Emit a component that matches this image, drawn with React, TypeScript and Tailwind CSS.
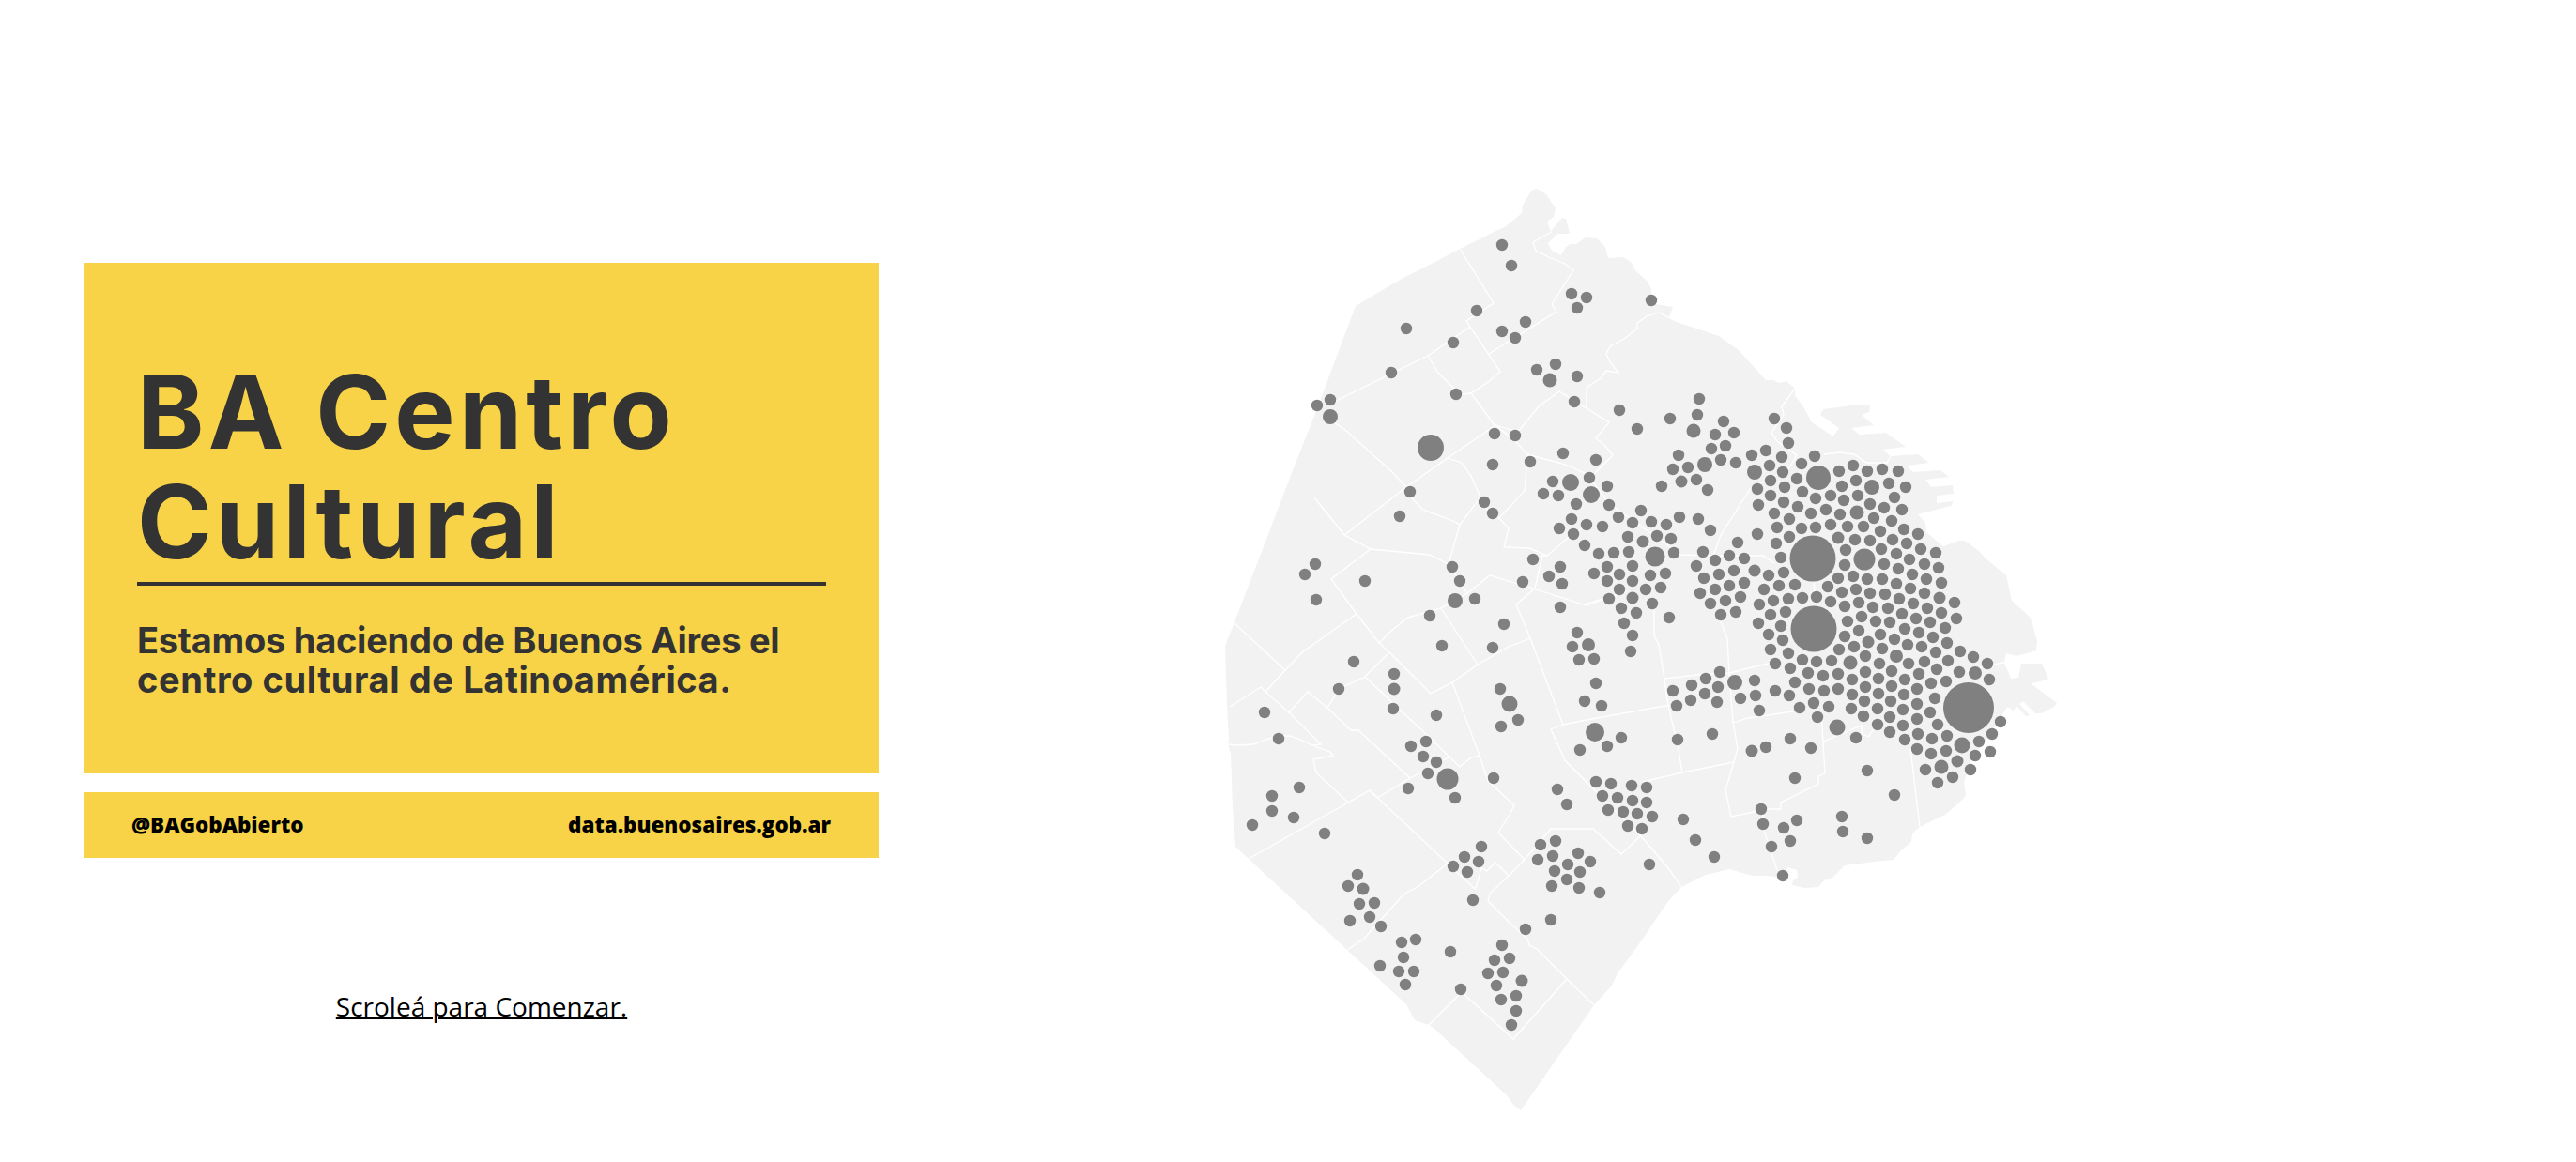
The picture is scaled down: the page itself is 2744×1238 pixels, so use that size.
const land =
  "1305,688 1315,663 1366,530 1377,501 1400,443 1444,326 1493,297 1523,282 1555,265 1578,254 1593,246 1603,242 1621,227 1622,219 1631,203 1637,201 1647,207 1657,222 1655,231 1648,236 1652,247 1653,245 1664,232 1668,233 1672,248 1670,249 1659,249 1649,259 1653,267 1663,272 1668,263 1673,260 1679,260 1689,253 1701,254 1710,263 1713,275 1729,274 1738,280 1742,288 1755,300 1759,308 1759,318 1764,324 1782,327 1778,338 1783,342 1831,358 1852,373 1881,405 1889,405 1895,408 1903,406 1912,414 1912,421 1922,435 1930,450 1953,465 1959,456 1939,442 1942,436 1972,432 1982,431 1992,432 1991,439 1983,442 1996,453 1972,456 1981,463 2009,461 2030,476 2005,479 2014,486 2043,484 2055,493 2031,496 2038,503 2067,501 2076,508 2051,511 2057,519 2080,517 2081,526 2063,528 2063,536 2081,534 2078,539 2043,548 2051,557 2052,567 2070,582 2087,576 2093,576 2108,587 2115,595 2137,613 2143,640 2163,658 2170,683 2169,693 2155,697 2148,699 2137,696 2135,706 2142,723 2150,722 2153,707 2175,707 2182,723 2170,727 2163,728 2191,749 2188,753 2175,760 2168,760 2155,747 2151,750 2162,762 2158,763 2148,752 2145,757 2138,753 2130,767 2100,810 2092,833 2094,848 2085,857 2072,868 2045,881 2037,888 2036,897 2025,906 2017,916 1997,918 1965,922 1952,935 1943,938 1937,945 1923,946 1909,943 1910,938 1915,935 1914,927 1905,924 1897,935 1883,933 1867,933 1842,926 1817,932 1791,945 1777,960 1750,1000 1723,1037 1717,1050 1698,1071 1620,1183 1612,1177 1605,1167 1528,1096 1522,1092 1507,1087 1498,1070 1435,1012 1330,915 1316,902 1313,860 1311,803 1308,793 1309,787 1307,752";

const borders = [
  "1555,265 1591,323 1562,342 1598,396 1585,407 1567,419 1558,420 1548,413 1532,397 1521,379",
  "1423,427 1521,379 1566,348",
  "1418,448 1433,458 1483,503 1498,519 1542,488 1593,453 1614,470 1627,484",
  "1567,419 1592,453",
  "1593,453 1617,460 1639,433 1661,417 1690,435 1714,450 1700,467 1710,475 1718,485 1700,503 1690,515",
  "1586,377 1658,332 1653,324 1676,288 1667,281 1650,274 1636,267 1633,258 1653,247",
  "1542,488 1557,493 1567,507 1577,530 1555,559",
  "1400,530 1432,570 1460,585 1523,591 1543,601",
  "1432,570 1498,519 1503,530 1516,543 1548,555 1555,559 1543,601 1563,632",
  "1627,484 1624,523 1597,552 1607,563 1602,583 1629,584 1648,592 1670,573 1690,560",
  "1597,552 1577,537",
  "1627,484 1668,495 1690,505 1712,533 1723,543 1747,560 1778,582 1790,591 1825,592 1833,570 1865,520 1905,500 1914,485 1893,470 1887,461 1900,442 1898,433 1912,414",
  "1460,585 1418,617 1445,654 1469,685 1481,673 1499,658 1535,648 1563,632 1587,613 1633,627 1690,645 1733,630",
  "1648,592 1643,592 1635,627 1615,644 1630,680 1665,772 1652,777 1667,810 1750,893 1778,926 1791,945",
  "1445,654 1387,695 1369,714 1314,663",
  "1369,714 1348,737 1373,759 1393,737 1414,754 1426,734 1454,721 1480,695 1469,685",
  "1454,721 1520,783 1555,817 1567,807 1576,805 1585,832 1613,858 1608,868 1596,887 1623,915 1622,918 1607,933",
  "1480,695 1524,739 1547,727 1574,708 1607,689 1630,680",
  "1535,648 1574,708",
  "1547,727 1576,805",
  "1343,732 1348,737",
  "1310,753 1343,732",
  "1373,759 1407,793 1398,794 1383,787 1373,784 1362,784 1348,788 1335,793 1317,794 1308,793",
  "1400,795 1417,801 1420,805 1399,809 1402,823 1436,855 1459,842 1542,920 1510,945 1496,952 1453,1000 1435,1012",
  "1436,855 1330,915",
  "1414,754 1439,778 1447,778 1502,829 1467,850 1459,842",
  "1502,829 1543,807",
  "1665,772 1690,767 1773,752 1777,752",
  "1542,920 1570,946 1572,946 1578,925 1584,928 1593,919 1607,933 1587,952 1585,960 1607,982 1627,1000 1629,1007 1637,1011 1669,1043 1698,1071",
  "1669,1043 1612,1107 1557,1057 1522,1092",
  "1622,918 1652,883 1697,883 1727,910 1750,888",
  "1690,435 1690,413 1705,403 1711,395 1724,397 1715,386 1711,377 1715,369 1730,361 1744,350 1744,344 1754,337 1767,333 1781,340",
  "1943,484 1959,482 1975,484 1988,493 2010,493 2014,486",
  "1825,592 1863,592 1878,592 1890,600",
  "1832,660 1840,680 1842,718 1846,770 1851,797 1847,812 1838,842 1844,870 1883,862 1897,862 1897,855 1937,835 1937,827 1944,824 1942,790 1940,760",
  "1762,650 1762,677 1767,687 1773,723 1777,752 1787,793 1792,823",
  "1690,643 1733,630",
  "1773,723 1817,718 1842,717 1887,706",
  "1750,833 1792,823 1847,812",
  "1846,770 1862,765 1910,758",
  "1942,790 1983,773 1983,781 1990,785 1997,775",
  "1878,862 1878,882 1893,927",
  "2035,797 2045,881",
  "1932,620 1933,630",
  "2137,705 2095,715",
];

// [x, y] are the regular points, [x, y, r] the larger ones
const dots: number[][] = [
  [1600, 261], [1610, 283], [1674, 313], [1690, 317], [1680, 328], [1573, 331], [1498, 350], [1625, 343], [1600, 353], [1614, 360],
  [1548, 365], [1657, 388], [1637, 394], [1651, 405, 7.5], [1680, 401], [1482, 397], [1677, 428], [1551, 420], [1417, 426], [1403, 432],
  [1417, 444, 8], [1524, 477, 14], [1592, 462], [1614, 464], [1665, 483], [1630, 492], [1590, 495], [1654, 513], [1673, 514, 9], [1502, 524],
  [1693, 509], [1581, 535], [1590, 547], [1491, 550], [1644, 526], [1660, 528], [1679, 537], [1674, 553], [1690, 559], [1661, 563],
  [1676, 569], [1688, 581], [1633, 596], [1662, 604], [1547, 604], [1650, 614], [1664, 622], [1622, 620], [1555, 619], [1401, 601],
  [1390, 612], [1454, 619], [1402, 639], [1571, 638], [1550, 640, 8], [1662, 647], [1523, 656], [1602, 665], [1680, 674], [1675, 689],
  [1692, 687, 7], [1682, 703], [1536, 688], [1590, 690], [1442, 705], [1485, 718], [1485, 734, 6.5], [1426, 734], [1598, 734], [1608, 750, 8.5],
  [1688, 747], [1484, 755], [1347, 759], [1530, 762], [1617, 767], [1599, 774], [1362, 787], [1519, 790], [1503, 795], [1516, 806],
  [1530, 812], [1683, 799], [1521, 824], [1542, 830, 11.5], [1591, 829], [1384, 839], [1500, 840], [1659, 841], [1355, 848], [1550, 850],
  [1669, 857], [1355, 864], [1378, 871], [1334, 879], [1411, 888], [1713, 863], [1729, 865], [1744, 867], [1734, 880], [1749, 883],
  [1657, 896], [1641, 900], [1654, 912], [1638, 916], [1681, 909], [1670, 921], [1694, 918], [1656, 928], [1683, 929], [1669, 937],
  [1653, 944], [1682, 946], [1704, 951], [1578, 902], [1560, 913], [1575, 918], [1548, 923], [1563, 929], [1569, 959], [1652, 980],
  [1625, 990], [1446, 932], [1436, 944], [1452, 947, 6.5], [1464, 962], [1448, 963], [1459, 977], [1438, 981], [1471, 987], [1508, 1001],
  [1493, 1004], [1495, 1020], [1545, 1014], [1600, 1007], [1608, 1021], [1592, 1023], [1470, 1029], [1490, 1035], [1506, 1035], [1601, 1036],
  [1585, 1037], [1621, 1045, 6.5], [1497, 1049], [1594, 1050], [1556, 1054], [1615, 1061], [1599, 1065], [1615, 1077], [1610, 1092],
  [1759, 320], [1810, 425], [1725, 437], [1808, 442], [1779, 446], [1836, 449], [1890, 446], [1903, 456], [1744, 457], [1804, 459, 7.5],
  [1847, 461], [1827, 463], [1905, 472], [1838, 475], [1823, 478], [1881, 480], [1866, 485], [1788, 485], [1933, 486], [1898, 487],
  [1700, 490], [1833, 490], [1849, 493], [1816, 495, 8], [1885, 496], [1919, 494], [1974, 496], [2005, 500], [1959, 502], [1989, 502],
  [2022, 502], [1798, 498], [1782, 500], [1869, 503, 8], [1899, 503], [1937, 509, 13], [1914, 510], [1807, 511], [1886, 512], [1977, 512],
  [1791, 513, 6.5], [2012, 515], [1712, 518], [1770, 518], [1962, 518], [1994, 519, 8], [2030, 519], [1901, 519], [1872, 521], [1819, 522],
  [1695, 527, 9], [1920, 524], [1886, 528], [1950, 528], [1979, 528], [2018, 530], [1934, 531], [1964, 533], [1900, 535], [1992, 537],
  [1714, 538], [1873, 538], [1915, 540], [2007, 541], [2026, 543], [1748, 544], [1945, 543], [1978, 546, 7.5], [1890, 547], [1929, 547],
  [1960, 548], [1724, 551], [1789, 551], [1809, 553], [1906, 553], [1996, 552], [2015, 555], [1739, 557], [1759, 556], [1775, 559],
  [1950, 559], [1968, 561], [1985, 561], [1707, 561], [1893, 562], [1934, 562], [1919, 563], [2028, 564], [1822, 565], [2003, 566],
  [1872, 569], [2043, 569], [1765, 571], [1906, 572], [1734, 572], [1780, 574], [1958, 573, 6.5], [2016, 575], [1976, 575], [1992, 576],
  [1750, 577, 6.5], [1892, 579], [1851, 578], [2031, 579], [1931, 595, 24.5], [1986, 596, 11.5], [1966, 586], [2004, 585], [2046, 585], [1814, 588],
  [1735, 588], [1719, 589], [2062, 589], [1783, 589], [1703, 590], [2020, 590], [1842, 592], [1763, 593, 10.5], [1897, 594], [2034, 596],
  [1858, 595], [1827, 597], [2007, 601], [2050, 601], [1739, 603], [1965, 602], [1712, 604], [1807, 603], [2065, 605], [2022, 606],
  [1847, 608], [1869, 608, 6.5], [1900, 610], [2037, 612], [1774, 611], [1725, 612], [1884, 613], [1831, 612], [1698, 611], [1758, 613],
  [1974, 614], [1958, 616], [1989, 617], [2005, 617], [1815, 616], [2052, 617], [1712, 619], [1739, 619], [2020, 622], [1858, 621],
  [2068, 621], [1912, 623], [1895, 624], [1842, 624], [1947, 625], [1769, 626], [1725, 628], [1879, 628], [1827, 628], [1753, 628],
  [2035, 627], [1977, 628], [1962, 631], [2050, 632], [1992, 632], [1811, 632], [2008, 633], [2066, 637, 6.5], [1854, 636], [1739, 637, 6.5],
  [1935, 636], [1920, 637], [2023, 638], [1905, 638], [1714, 638], [1889, 640], [1838, 640], [2038, 643], [1950, 641], [2082, 642],
  [1980, 642], [1760, 643], [1822, 643], [1874, 644], [1965, 646], [1995, 647], [1727, 648], [2053, 648], [2011, 648], [1902, 652],
  [1849, 652], [1743, 653], [2068, 653], [2026, 654], [1833, 655], [1886, 655], [1983, 657], [1778, 658], [2084, 659], [2041, 659],
  [1932, 670, 24.5], [1998, 662], [1968, 662], [2013, 663], [2056, 663], [1730, 664], [1873, 664], [1897, 667], [2072, 669], [2029, 670],
  [1980, 672], [2044, 674], [2003, 676], [1739, 677], [1884, 676], [1965, 678], [2059, 679], [2018, 681], [1899, 682], [1990, 684, 6.5],
  [2074, 685], [2032, 687], [1975, 689], [2047, 689], [2005, 691], [1886, 692], [1959, 692], [2062, 695], [1737, 694], [2088, 694],
  [1905, 696], [2020, 699, 7], [1987, 699], [1698, 702], [2102, 700], [2050, 705], [1920, 703], [2075, 704], [2033, 707], [2002, 707],
  [1935, 705], [1951, 704], [1971, 706, 7.5], [1891, 707], [2117, 707], [1907, 712], [1987, 716], [1832, 716], [2087, 716], [2063, 713],
  [2015, 715], [2104, 717, 7], [1926, 717], [2044, 718], [1942, 720], [1958, 718], [1817, 723], [2029, 724], [2001, 723], [1973, 724],
  [2119, 724], [1869, 725], [2057, 728], [2073, 726], [1848, 727, 8], [1912, 727], [1700, 728], [1802, 730], [1830, 732], [1987, 732],
  [2015, 731], [1927, 734], [1958, 734], [2042, 734], [1891, 736], [1943, 736], [1782, 736], [2001, 739], [1816, 739], [1973, 740],
  [2028, 740], [1870, 741], [1906, 741], [2061, 744], [1854, 744], [2097, 754, 27], [1801, 746], [1986, 747], [2014, 747], [1829, 748],
  [1932, 749], [2042, 750], [1948, 753], [1917, 754], [1786, 752], [1706, 752], [1972, 755], [2000, 755], [2027, 756], [1874, 757],
  [2056, 759], [1985, 763], [2013, 764], [1936, 764], [2042, 766], [2131, 769], [2064, 772], [2000, 772], [2027, 773], [1957, 775, 8.5],
  [1699, 780, 10], [1824, 782], [2043, 782], [2122, 782], [2013, 780], [2074, 784], [1977, 786], [1727, 786], [1787, 788], [1907, 787],
  [2029, 788], [2058, 787], [2108, 790], [2090, 794, 8.5], [1881, 796], [1929, 797], [1866, 800, 6.5], [1712, 795], [2042, 798], [2073, 800],
  [2120, 801], [2104, 805], [2057, 803], [2085, 811, 6.5], [2068, 817, 7.5], [2051, 820], [2099, 820], [1989, 821], [1912, 829], [2080, 828],
  [2064, 834], [2018, 847], [1700, 833], [1716, 835], [1738, 837], [1754, 839], [1707, 848], [1723, 850], [1739, 853], [1754, 855],
  [1876, 862], [1760, 870], [1793, 873], [1806, 895], [1826, 913], [1757, 921], [1878, 878], [1914, 874], [1900, 882], [1907, 896],
  [1887, 902], [1899, 933], [1962, 870], [1963, 886], [1989, 893],
];

function CityMap() {
  return (
    <svg viewBox="1280 180 940 1020" className="ml-[344px] mt-[180px] h-[1020px] w-[940px] shrink-0">
      <polygon points={land} fill="#f2f2f2" />
      {borders.map((b, i) => (
        <polyline key={i} points={b} fill="none" stroke="#ffffff" strokeWidth="1.3" />
      ))}
      {dots.map((d, i) => (
        <circle key={i} cx={d[0]} cy={d[1]} r={d[2] ?? 6.2} fill="#808080" />
      ))}
    </svg>
  );
}

export default function App() {
  return (
    <div className="flex h-[1238px] w-full overflow-hidden bg-white">
      <div className="ml-[90px] mt-[280px] w-[846px] shrink-0">
        <div className="h-[544px] bg-[#f8d347] pl-[56px] pr-[56px] pt-[100px] font-['Inter',sans-serif] text-[#333333]">
          <h1 className="border-b-4 border-[#333333] pb-[6px] text-[108px] font-bold leading-[117px] tracking-[4.2px]">
            BA Centro
            <br />
            Cultural
          </h1>
          <p className="mt-[37px] text-[38px] font-bold leading-[42px] tracking-[-0.25px]">
            Estamos haciendo de Buenos Aires el
            <br />
            <span className="tracking-[0.6px]">centro cultural de Latinoamérica.</span>
          </p>
        </div>
        <div className="mt-[20px] flex h-[70px] items-center justify-between bg-[#f8d347] pl-[50px] pr-[51px] font-['Open_Sans',sans-serif] text-[22.4px] font-extrabold text-black">
          <span>@BAGobAbierto</span>
          <span>data.buenosaires.gob.ar</span>
        </div>
        <div className="mt-[137px] text-center font-['Open_Sans',sans-serif] text-[28px] text-black">
          <a href="#" className="underline decoration-2">
            Scroleá para Comenzar.
          </a>
        </div>
      </div>
      <CityMap />
    </div>
  );
}
